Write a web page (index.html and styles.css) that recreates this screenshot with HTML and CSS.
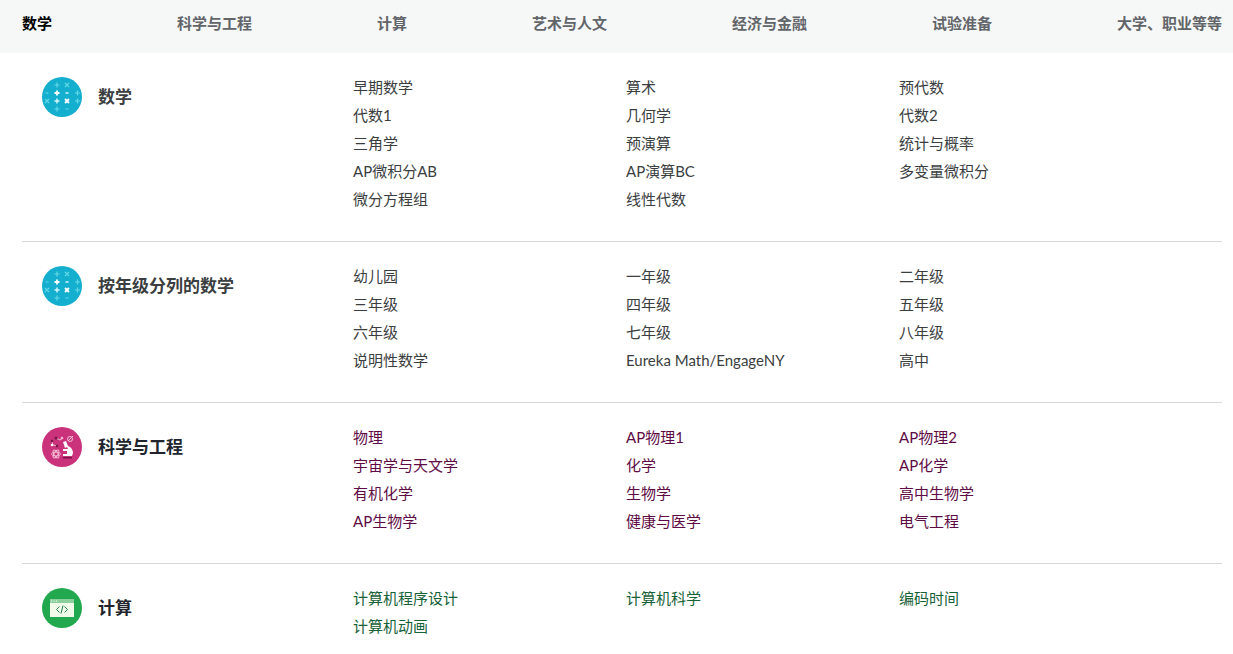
FILE: index.html
```html
<!DOCTYPE html>
<html lang="zh-CN">
<head>
<meta charset="utf-8">
<meta name="viewport" content="width=device-width, initial-scale=1">
<title>课程</title>
<link rel="stylesheet" href="styles.css">
</head>
<body>
<svg class="sprite" aria-hidden="true">
  <symbol id="icon-math" viewBox="0 0 40 40">
    <circle cx="20" cy="20" r="20" fill="#14afcf"/>
    <g fill="none" stroke="#63d9e8" stroke-width="1.2">
      <path d="M12.5 8h5M15 5.500v5M23 6l4 4M27 6l-4 4M3.500 16h3M33 16h5M35.500 13.500v5M3 22l4 4M7 22l-4 4M33 24h5M35.500 21.500v5M12.500 32h5M15 29.500v5M23.500 32h3"/>
    </g>
    <g fill="none" stroke="#d4f6fa" stroke-width="1.500"><path d="M12.500 24h5M15 21.500v5M23.500 16h3"/></g>
    <g fill="none" stroke="#fff" stroke-width="1.800"><path d="M12.500 16h5M15 13.500v5M23 22l4 4M27 22l-4 4"/></g>
  </symbol>
  <symbol id="icon-science" viewBox="0 0 40 40">
    <circle cx="20" cy="20" r="20" fill="#ca337c"/>
    <g fill="none" stroke="#f3bad2" stroke-width="1">
      <path d="M14 11l4 2 3-2M10 15l1 3 4 1"/>
      <circle cx="28" cy="12" r="2.500"/><path d="M26 14l5-5"/>
      <ellipse cx="14" cy="27" rx="4.500" ry="2"/>
      <ellipse cx="14" cy="27" rx="4.500" ry="2" transform="rotate(60 14 27)"/>
      <ellipse cx="14" cy="27" rx="4.500" ry="2" transform="rotate(120 14 27)"/>
    </g>
    <g fill="#781647"><circle cx="14" cy="11" r="1.500"/><circle cx="10" cy="14" r="1.300"/><circle cx="15" cy="19" r="1.300"/><path d="M21 30h9v1.500h-9z"/></g>
    <circle cx="10" cy="18" r="1.300" fill="#fff"/><circle cx="20" cy="11" r="1.300" fill="#f3bad2"/>
    <path d="M21 15l3-1 2 5c3 1 5 4 5 7l-1 3h-9v-2h4v-3h-4v-2h5l-1-2-2 1z" fill="#fff"/>
  </symbol>
  <symbol id="icon-computing" viewBox="0 0 40 40">
    <circle cx="20" cy="20" r="20" fill="#22a94f"/>
    <path d="M8 11h24v18H8z" fill="#f2fbe9"/>
    <path d="M8 11h24v4H8z" fill="#8bd09c"/>
    <path d="M9 13h1M11.500 13h1M14 13h1" stroke="#fff" stroke-width="1.200"/>
    <path d="M17.500 18.500L14.500 21.500l3 3M22.500 18.500l3 3-3 3M21 17.500l-2 8" fill="none" stroke="#218052" stroke-width="1"/>
  </symbol>
</svg>

<nav class="tabs" aria-label="学科">
  <a class="tab tab-active" href="#math" aria-current="true">数学</a>
  <a class="tab" href="#science">科学与工程</a>
  <a class="tab" href="#computing">计算</a>
  <a class="tab" href="#arts">艺术与人文</a>
  <a class="tab" href="#economics">经济与金融</a>
  <a class="tab" href="#test-prep">试验准备</a>
  <a class="tab" href="#college">大学、职业等等</a>
</nav>

<main class="subjects">
  <section class="subject" id="math">
    <h2 class="subject-title"><svg class="subject-icon" aria-hidden="true"><use href="#icon-math"/></svg>数学</h2>
    <ul class="topics">
      <li><a href="#">早期数学</a></li><li><a href="#">算术</a></li><li><a href="#">预代数</a></li>
      <li><a href="#">代数1</a></li><li><a href="#">几何学</a></li><li><a href="#">代数2</a></li>
      <li><a href="#">三角学</a></li><li><a href="#">预演算</a></li><li><a href="#">统计与概率</a></li>
      <li><a href="#">AP微积分AB</a></li><li><a href="#">AP演算BC</a></li><li><a href="#">多变量微积分</a></li>
      <li><a href="#">微分方程组</a></li><li><a href="#">线性代数</a></li>
    </ul>
  </section>
  <section class="subject" id="math-by-grade">
    <h2 class="subject-title"><svg class="subject-icon" aria-hidden="true"><use href="#icon-math"/></svg>按年级分列的数学</h2>
    <ul class="topics">
      <li><a href="#">幼儿园</a></li><li><a href="#">一年级</a></li><li><a href="#">二年级</a></li>
      <li><a href="#">三年级</a></li><li><a href="#">四年级</a></li><li><a href="#">五年级</a></li>
      <li><a href="#">六年级</a></li><li><a href="#">七年级</a></li><li><a href="#">八年级</a></li>
      <li><a href="#">说明性数学</a></li><li><a href="#">Eureka Math/EngageNY</a></li><li><a href="#">高中</a></li>
    </ul>
  </section>
  <section class="subject subject-science" id="science">
    <h2 class="subject-title"><svg class="subject-icon" aria-hidden="true"><use href="#icon-science"/></svg>科学与工程</h2>
    <ul class="topics">
      <li><a href="#">物理</a></li><li><a href="#">AP物理1</a></li><li><a href="#">AP物理2</a></li>
      <li><a href="#">宇宙学与天文学</a></li><li><a href="#">化学</a></li><li><a href="#">AP化学</a></li>
      <li><a href="#">有机化学</a></li><li><a href="#">生物学</a></li><li><a href="#">高中生物学</a></li>
      <li><a href="#">AP生物学</a></li><li><a href="#">健康与医学</a></li><li><a href="#">电气工程</a></li>
    </ul>
  </section>
  <section class="subject subject-computing" id="computing">
    <h2 class="subject-title"><svg class="subject-icon" aria-hidden="true"><use href="#icon-computing"/></svg>计算</h2>
    <ul class="topics">
      <li><a href="#">计算机程序设计</a></li><li><a href="#">计算机科学</a></li><li><a href="#">编码时间</a></li>
      <li><a href="#">计算机动画</a></li>
    </ul>
  </section>
</main>
</body>
</html>
```
FILE: styles.css
```css
* {
  box-sizing: border-box;
}

body {
  margin: 0;
  background: #fff;
  color: #3b3e40;
  font-family: Lato, "Noto Sans CJK SC", sans-serif;
  font-size: 15px;
  line-height: 28px;
}

a {
  color: inherit;
  text-decoration: none;
}

a:hover {
  text-decoration: underline;
}

.sprite {
  display: none;
}

.tabs {
  display: flex;
  justify-content: space-between;
  padding: 9px 11px 16px 22px;
  background: #f6f8f7;
}

.tab {
  color: #626569;
  font-weight: 700;
}

.tab-active {
  color: #000;
}

.subjects {
  padding: 0 11px 0 22px;
}

.subject {
  display: grid;
  grid-template-columns: 311fr 819fr;
  align-items: start;
  padding: 20px 50px 28px 20px;
}

.subject + .subject {
  border-top: 1px solid #d6d8da;
}

.subject-title {
  display: flex;
  align-items: center;
  gap: 16px;
  margin: 4px 0 0;
  color: #3b3e40;
  font-size: 17px;
  font-weight: 700;
}

.subject-icon {
  flex: none;
  width: 40px;
  height: 40px;
}

.topics {
  display: grid;
  grid-template-columns: repeat(3, 1fr);
  margin: 0;
  padding: 0;
  list-style: none;
}

.subject-science .subject-title,
.subject-computing .subject-title {
  color: #21242c;
}

.subject-science .topics {
  color: #5e0b45;
}

.subject-computing .topics {
  color: #166138;
}
```
